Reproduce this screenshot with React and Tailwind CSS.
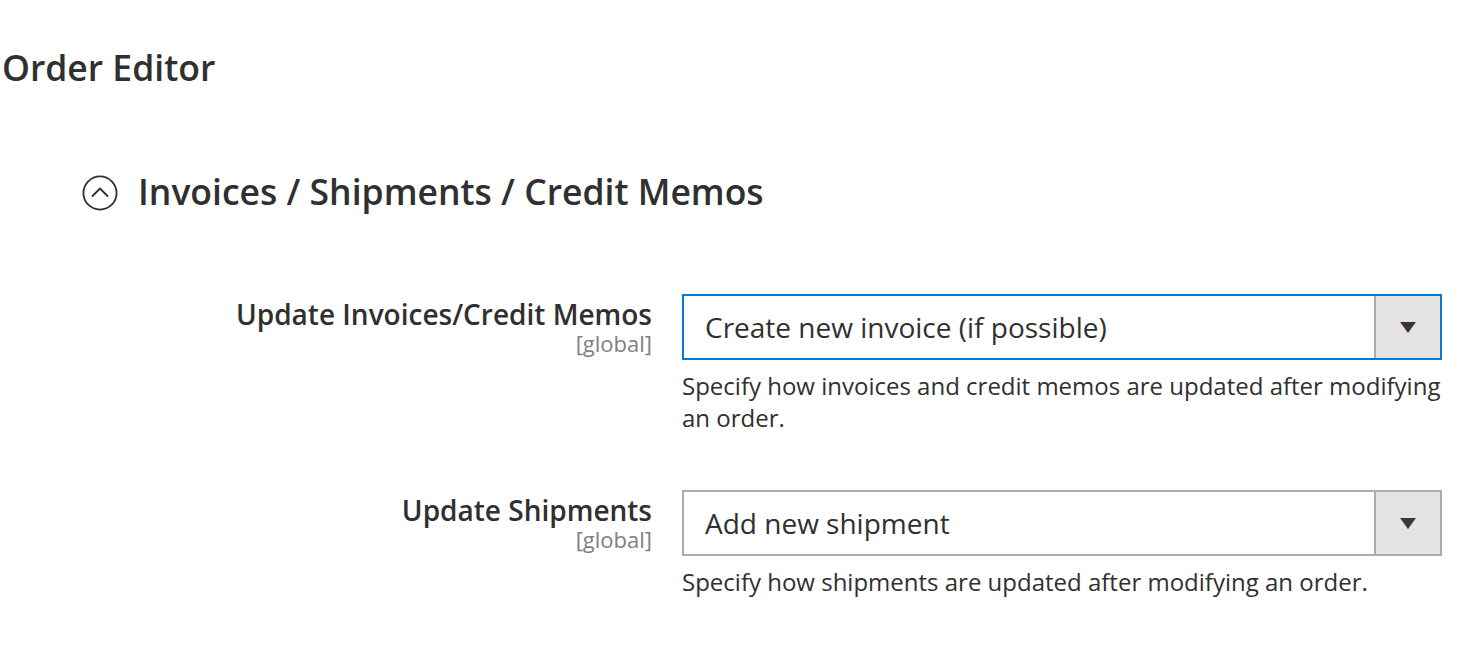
import React from 'react';

const fields = [
  {
    label: 'Update Invoices/Credit Memos',
    value: 'Create new invoice (if possible)',
    note: 'Specify how invoices and credit memos are updated after modifying an order.',
    focused: true,
  },
  {
    label: 'Update Shipments',
    value: 'Add new shipment',
    note: 'Specify how shipments are updated after modifying an order.',
    focused: false,
  },
];

function CollapseIcon() {
  return (
    <svg width="36" height="36" viewBox="0 0 36 36" fill="none" stroke="#303030" strokeWidth="1.8" strokeLinecap="round" strokeLinejoin="round">
      <circle cx="18" cy="18" r="16.6" />
      <path d="M10.5 21 L18 13.5 L25.5 21" />
    </svg>
  );
}

function SelectBox({ value, focused }) {
  return (
    <div
      className={`flex h-[66px] w-[760px] border-2 bg-white ${focused ? 'border-[#007bdb]' : 'border-[#adadad]'}`}
    >
      <div className="flex flex-1 items-center pl-[21px] text-[28px] text-[#303030]">{value}</div>
      <div className="flex w-[66px] items-center justify-center border-l-2 border-[#adadad] bg-[#e3e3e3]">
        <svg width="16" height="11" viewBox="0 0 16 11">
          <path d="M0 0 H16 L8 11 Z" fill="#41362f" />
        </svg>
      </div>
    </div>
  );
}

export default function App() {
  return (
    <div
      className="min-h-screen bg-white pl-[2px] text-[#303030]"
      style={{ fontFamily: '"Open Sans", "Noto Sans", sans-serif' }}
    >
      {/* Page section title */}
      <h1 className="pt-[47px] text-[35.5px] font-semibold leading-[40px] text-[#303030]">Order Editor</h1>

      {/* Collapsible block */}
      <div className="mt-[84px] flex items-center pl-[80px]">
        <div className="mt-[4px]">
          <CollapseIcon />
        </div>
        <h2 className="ml-[20px] text-[35.5px] font-semibold leading-[40px]">Invoices / Shipments / Credit Memos</h2>
      </div>

      <div className="mt-[83px]">
        {fields.map((f, i) => (
          <div key={f.label} className={`flex items-start ${i > 0 ? 'mt-[56px]' : ''}`}>
            <div className="w-[650px] text-right">
              <div className="text-[28px] font-semibold leading-[40px]">{f.label}</div>
              <div className="text-[22px] leading-[18px] text-[#808080]">[global]</div>
            </div>
            <div className="ml-[30px] w-[760px]">
              <SelectBox value={f.value} focused={f.focused} />
              <p className="mt-[10px] text-[24px] leading-[32px] text-[#303030]">{f.note}</p>
            </div>
          </div>
        ))}
      </div>
    </div>
  );
}
